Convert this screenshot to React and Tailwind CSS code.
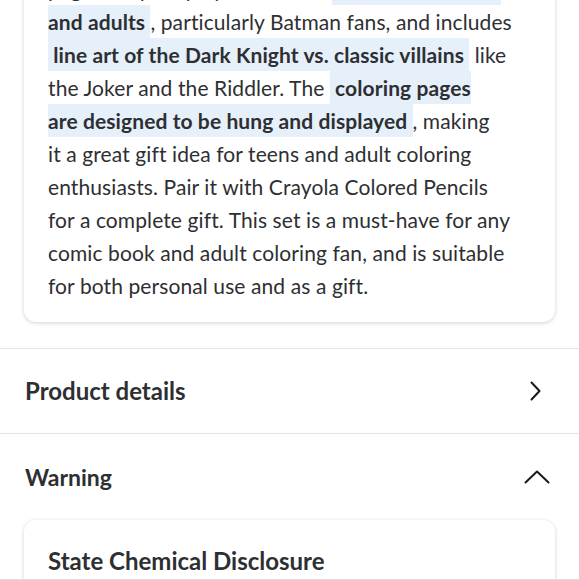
import React from "react";

function Hl({ children }) {
  return (
    <span className="bg-[#e6f0fb] font-bold py-[4px] [box-decoration-break:clone]">
      {children}
    </span>
  );
}

function ChevronRight() {
  return (
    <svg width="24" height="24" viewBox="0 0 24 24" fill="none" stroke="#1a1a1a" strokeWidth="2" strokeLinecap="round" strokeLinejoin="round">
      <path d="M8.5 3.5 L16.5 12 L8.5 20.5" />
    </svg>
  );
}

function ChevronUp() {
  return (
    <svg width="26" height="16" viewBox="0 0 26 16" fill="none" stroke="#1a1a1a" strokeWidth="2" strokeLinecap="round" strokeLinejoin="round">
      <path d="M1.5 13.5 L13 2.5 L24.5 13.5" />
    </svg>
  );
}

export default function App() {
  return (
    <div
      className="h-[580px] w-[579px] overflow-hidden bg-white text-[#2e2f32] border-b border-[#dcdcdc]"
      style={{ fontFamily: "Lato, 'Open Sans', sans-serif" }}
    >
      <div className="px-6">
        <div className="-mt-[48px] rounded-xl bg-white px-6 pt-5 pb-5 shadow-[0_1px_4px_rgba(0,0,0,0.18)]">
          <p className="text-[21px] leading-[33px] tracking-[0.1px] whitespace-nowrap">
            pages for your playtime, made <Hl>&nbsp;for all kids, teens&nbsp;</Hl>
            <br />
            <Hl>and adults&nbsp;</Hl>, particularly Batman fans, and includes
            <br />
            <Hl>&nbsp;line art of the Dark Knight vs. classic villains&nbsp;</Hl> like
            <br />
            the Joker and the Riddler. The <Hl>&nbsp;coloring pages
            <br />
            are designed to be hung and displayed&nbsp;</Hl>, making
            <br />
            it a great gift idea for teens and adult coloring
            <br />
            enthusiasts. Pair it with Crayola Colored Pencils
            <br />
            for a complete gift. This set is a must-have for any
            <br />
            comic book and adult coloring fan, and is suitable
            <br />
            for both personal use and as a gift.
          </p>
        </div>
      </div>

      <div className="mt-[26px] border-t border-[#e3e4e5]">
        <div className="flex h-[84px] items-center justify-between pl-[25px] pr-[32px]">
          <h2 className="text-[24px] font-bold">Product details</h2>
          <ChevronRight />
        </div>
      </div>

      <div className="border-t border-[#e3e4e5]">
        <div className="flex h-[86px] items-center justify-between pl-[25px] pr-[29px]">
          <h2 className="text-[23px] font-bold">Warning</h2>
          <ChevronUp />
        </div>
        <div className="px-6">
          <div className="rounded-xl bg-white px-6 pt-[25px] pb-6 shadow-[0_1px_4px_rgba(0,0,0,0.18)]">
            <h3 className="text-[24px] font-bold leading-[32px]">State Chemical Disclosure</h3>
          </div>
        </div>
      </div>
    </div>
  );
}
